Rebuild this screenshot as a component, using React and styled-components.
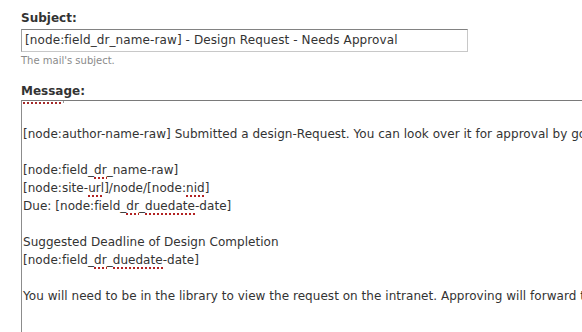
import React from "react";
import styled, { createGlobalStyle } from "styled-components";

const Global = createGlobalStyle`
  html, body { margin: 0; padding: 0; background: #fff; overflow: hidden; }
  body { font-family: "DejaVu Sans", Verdana, sans-serif; }
`;

const Page = styled.div`
  padding: 10px 0 0 21px;
  width: 561px;
  height: 322px;
  overflow: hidden;
`;

const Field = styled.div`
  display: flex;
  flex-direction: column;
  align-items: flex-start;
  margin-bottom: ${(p) => p.$gap || 0}px;
`;

const Label = styled.label`
  font-weight: bold;
  font-size: 12px;
  line-height: 16px;
  color: #333;
  margin-bottom: ${(p) => p.$gap}px;
`;

const TextInput = styled.div`
  box-sizing: border-box;
  width: 447px;
  height: 23px;
  border: 1px solid;
  border-color: #828282 #c8c8c8 #c8c8c8 #a0a0a0;
  padding: 0 3px;
  font-size: 12px;
  line-height: 21px;
  letter-spacing: 0.1px;
  color: #333;
  white-space: pre;
  overflow: hidden;
`;

const Description = styled.div`
  font-size: 10px;
  line-height: 13px;
  color: #8a8a8a;
  margin-top: 2px;
`;

const TextArea = styled.div`
  box-sizing: border-box;
  width: 700px;
  height: 240px;
  border: 1px solid;
  border-color: #7a7a7a #c8c8c8 #c8c8c8 #8c8c8c;
  padding: 0 1px;
  overflow: hidden;
  font-size: 12px;
  line-height: 18px;
  letter-spacing: 0.04px;
  color: #333;
`;

const ClippedLine = styled.div`
  height: 6px;
  display: flex;
  align-items: flex-start;
  gap: 1px;
`;

const Squiggle = styled.span`
  display: block;
  width: ${(p) => p.$w}px;
  height: 2px;
  margin-top: 1px;
  background: repeating-linear-gradient(to right, #a52a2a 0 2px, transparent 2px 4px);
`;

const Tick = styled.span`
  display: block;
  width: 1px;
  height: 2px;
  background: #999;
`;

const Line = styled.div`
  height: 18px;
  white-space: pre;
`;

const Miss = styled.span`
  background-image: repeating-linear-gradient(to right, #b22222 0 2px, transparent 2px 4px);
  background-size: 100% 2px;
  background-repeat: no-repeat;
  background-position: 0 100%;
  padding-bottom: 2px;
`;

export default function App() {
  return (
    <>
      <Global />
      <Page>
        <Field $gap={16}>
          <Label $gap={3}>Subject:</Label>
          <TextInput>[node:field_dr_name-raw] - Design Request - Needs Approval</TextInput>
          <Description>The mail's subject.</Description>
        </Field>
        <Field>
          <Label $gap={1}>Message:</Label>
          <TextArea>
            <ClippedLine>
              <Squiggle $w={39} />
              <Tick />
            </ClippedLine>
            <Line> </Line>
            <Line>[node:author-name-raw] Submitted a design-Request. You can look over it for approval by going to the link below.</Line>
            <Line> </Line>
            <Line>[node:field_<Miss>dr</Miss>_name-raw]</Line>
            <Line>[node:site-<Miss>url</Miss>]/node/[node:<Miss>nid</Miss>]</Line>
            <Line>Due: [node:field_<Miss>dr</Miss>_<Miss>duedate</Miss>-date]</Line>
            <Line> </Line>
            <Line>Suggested Deadline of Design Completion</Line>
            <Line>[node:field_<Miss>dr</Miss>_<Miss>duedate</Miss>-date]</Line>
            <Line> </Line>
            <Line>You will need to be in the library to view the request on the intranet. Approving will forward the request to the design team.</Line>
            <Line> </Line>
          </TextArea>
        </Field>
      </Page>
    </>
  );
}
